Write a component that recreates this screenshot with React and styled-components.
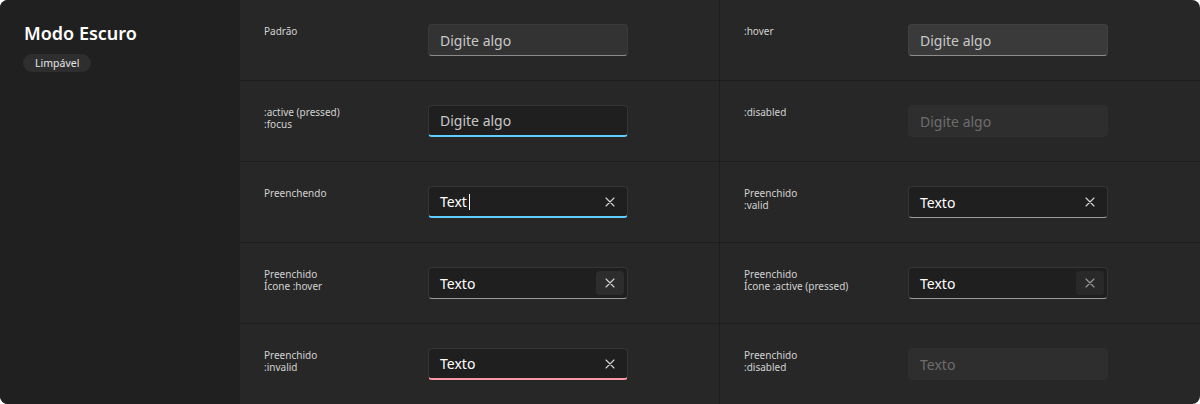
import React from "react";
import styled, { createGlobalStyle, css } from "styled-components";

const GlobalStyle = createGlobalStyle`
  html, body {
    margin: 0;
    padding: 0;
    background: #ffffff;
  }
  body {
    font-family: "Noto Sans", "Open Sans", sans-serif;
    -webkit-font-smoothing: antialiased;
  }
`;

const Card = styled.div`
  display: flex;
  width: 1200px;
  height: 404px;
  border-radius: 8px;
  overflow: hidden;
  background: #272727;
`;

const Sidebar = styled.aside`
  width: 240px;
  flex-shrink: 0;
  background: #202020;
  padding: 20px 23px;
  box-sizing: border-box;
  display: flex;
  flex-direction: column;
  align-items: flex-start;
  gap: 8px;
`;

const Title = styled.h1`
  margin: 0 0 0 1px;
  font-size: 18px;
  font-weight: 600;
  color: #ffffff;
  line-height: 26px;
`;

const Badge = styled.span`
  display: inline-flex;
  align-items: center;
  height: 18px;
  padding: 0 12px;
  border-radius: 9px;
  background: #2e2e2e;
  color: #e6e6e6;
  font-size: 10.5px;
`;

const Grid = styled.div`
  flex: 1;
  display: grid;
  grid-template-columns: 1fr 1fr;
  grid-auto-rows: 81px;
`;

const Cell = styled.div`
  display: grid;
  grid-template-columns: 164px 200px;
  align-items: start;
  padding: 24px 0 0 24px;
  box-sizing: border-box;
  border-bottom: ${(p) => (p.last ? "none" : "1px solid #1d1d1d")};
  border-right: ${(p) => (p.left ? "1px solid #1d1d1d" : "none")};
  ${(p) => p.last && "height: 80px;"}
`;

const Label = styled.div`
  font-size: 10px;
  line-height: 12px;
  color: #d2d2d2;
  padding-top: 1px;
  white-space: pre-line;
`;

const variants = {
  rest: css`
    background: #333333;
    border-color: #3a3a3a;
    border-bottom-color: #8c8c8c;
  `,
  hover: css`
    background: #3a3a3a;
    border-color: #414141;
    border-bottom-color: #8c8c8c;
  `,
  focus: css`
    background: #1f1f1f;
    border-color: #353535;
    border-bottom: 2px solid #60cdff;
  `,
  filled: css`
    background: #1f1f1f;
    border-color: #353535;
    border-bottom-color: #9a9a9a;
  `,
  invalid: css`
    background: #1f1f1f;
    border-color: #353535;
    border-bottom: 2px solid #ff99a4;
  `,
  disabled: css`
    background: #2e2e2e;
    border-color: #2f2f2f;
  `,
};

const Field = styled.div`
  display: flex;
  align-items: center;
  width: 200px;
  height: 32px;
  box-sizing: border-box;
  border: 1px solid transparent;
  border-radius: 4px;
  padding: 0 3px 0 11px;
  ${(p) => variants[p.variant]}
`;

const Value = styled.span`
  flex: 1;
  display: flex;
  align-items: center;
  font-size: 14px;
  color: ${(p) => (p.muted ? "#6d6d6d" : p.placeholder ? "#c8c8c8" : "#ffffff")};
`;

const Caret = styled.span`
  display: inline-block;
  width: 1px;
  height: 16px;
  margin-left: 2px;
  background: #ffffff;
`;

const ClearButton = styled.span`
  display: flex;
  align-items: center;
  justify-content: center;
  width: 28px;
  height: 24px;
  border-radius: 4px;
  color: ${(p) => (p.state === "pressed" ? "#9a9a9a" : "#d6d6d6")};
  background: ${(p) =>
    p.state === "hover" ? "#2d2d2d" : p.state === "pressed" ? "#292929" : "transparent"};
`;

function ClearIcon() {
  return (
    <svg width="10" height="10" viewBox="0 0 10 10" fill="none">
      <path d="M1 1L9 9M9 1L1 9" stroke="currentColor" strokeWidth="1.1" strokeLinecap="round" />
    </svg>
  );
}

function TextBox({ variant, value, placeholder, caret, clear }) {
  const disabled = variant === "disabled";
  return (
    <Field variant={variant}>
      <Value placeholder={placeholder} muted={disabled}>
        {value || placeholder}
        {caret && <Caret />}
      </Value>
      {clear && (
        <ClearButton state={clear}>
          <ClearIcon />
        </ClearButton>
      )}
    </Field>
  );
}

const cells = [
  { label: "Padrão", variant: "rest", placeholder: "Digite algo" },
  { label: ":hover", variant: "hover", placeholder: "Digite algo" },
  { label: ":active (pressed)\n:focus", variant: "focus", placeholder: "Digite algo" },
  { label: ":disabled", variant: "disabled", placeholder: "Digite algo" },
  { label: "Preenchendo", variant: "focus", value: "Text", caret: true, clear: "rest" },
  { label: "Preenchido\n:valid", variant: "filled", value: "Texto", clear: "rest" },
  { label: "Preenchido\nÍcone :hover", variant: "filled", value: "Texto", clear: "hover" },
  { label: "Preenchido\nÍcone :active (pressed)", variant: "filled", value: "Texto", clear: "pressed" },
  { label: "Preenchido\n:invalid", variant: "invalid", value: "Texto", clear: "rest" },
  { label: "Preenchido\n:disabled", variant: "disabled", value: "Texto" },
];

export default function App() {
  return (
    <>
      <GlobalStyle />
      <Card>
        <Sidebar>
          <Title>Modo Escuro</Title>
          <Badge>Limpável</Badge>
        </Sidebar>
        <Grid>
          {cells.map((c, i) => (
            <Cell key={i} left={i % 2 === 0} last={i >= cells.length - 2}>
              <Label>{c.label}</Label>
              <TextBox {...c} />
            </Cell>
          ))}
        </Grid>
      </Card>
    </>
  );
}
